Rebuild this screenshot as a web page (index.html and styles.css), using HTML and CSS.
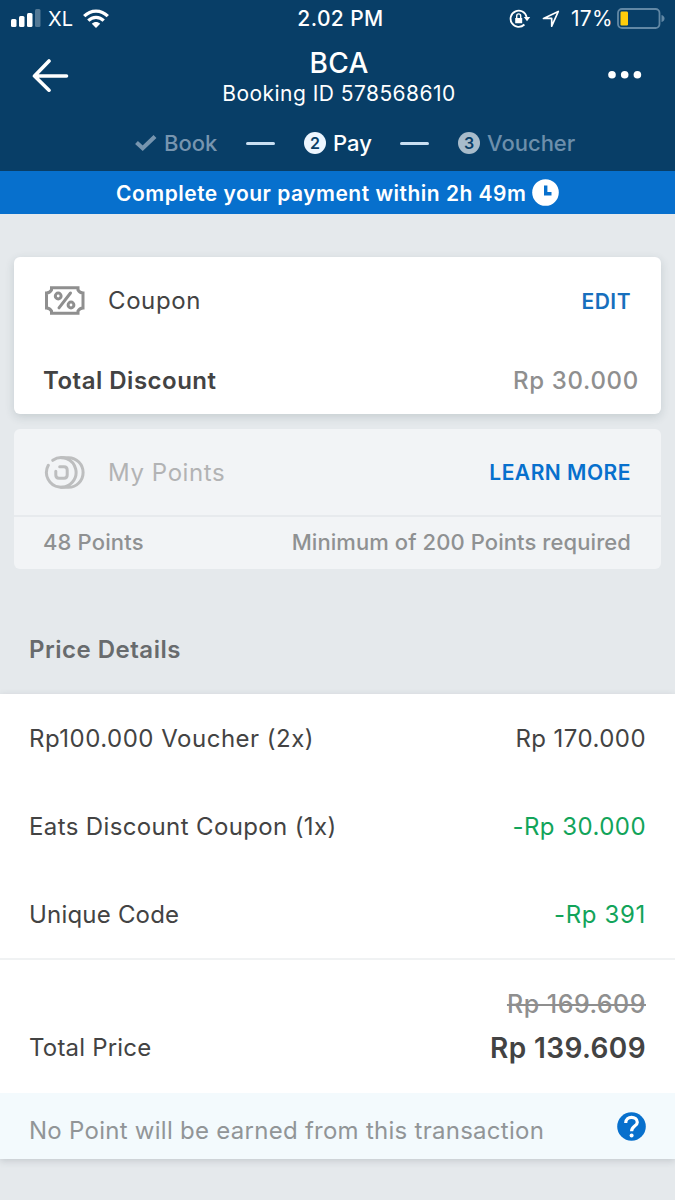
FILE: index.html
```html
<!DOCTYPE html>
<html lang="en">
<head>
<meta charset="utf-8">
<title>BCA Payment</title>
<link rel="stylesheet" href="styles.css">
</head>
<body>
<header class="header">
  <div class="status">
    <div class="status-left">
      <svg width="32" height="20" viewBox="0 0 32 20"><g fill="#fff"><rect x="1" y="10" width="5.5" height="8" rx="1.5"/><rect x="9" y="7" width="5.5" height="11" rx="1.5"/><rect x="17" y="4" width="5.5" height="14" rx="1.5"/><rect x="25" y="0" width="5.5" height="18" rx="1.5" opacity=".3"/></g></svg>
      <span class="carrier">XL</span>
      <svg class="wifi" width="26" height="20" viewBox="0 0 26 20"><g fill="none" stroke="#fff" stroke-width="3.2"><path d="M1.2 7.2C7.8.3 18.2.3 24.8 7.2"/><path d="M5.3 11.6C9.6 7.2 16.4 7.2 20.7 11.6"/></g><path fill="#fff" d="M8.8 14.7C11.2 12.4 14.8 12.4 17.2 14.7L13 19Z"/></svg>
    </div>
    <span class="clock">2.02 PM</span>
    <div class="status-right">
      <svg width="22" height="20" viewBox="0 0 22 20"><path fill="none" stroke="#fff" stroke-width="1.8" d="M17.600 8A8.100 8.100 0 1 0 15.400 15.500"/><path fill="#fff" d="M14.800 8h6.400L18 12.300ZM6.200 8.900h7v5.400h-7z"/><path fill="none" stroke="#fff" stroke-width="1.400" d="M7.700 9V6.900a2 2 0 0 1 4 0V9"/></svg>
      <svg class="locate" width="18" height="18" viewBox="0 0 18 18"><path fill="none" stroke="#fff" stroke-width="1.700" stroke-linejoin="round" d="M1.500 8.400L16.300 1.500 9.700 16.200V8.400Z"/></svg>
      <span class="percent">17%</span>
      <svg class="battery" width="48" height="22" viewBox="0 0 48 22"><rect x="1" y="1" width="41.500" height="19" rx="4" fill="none" stroke="#6288a5" stroke-width="1.800"/><path fill="#6288a5" d="M44.500 7q3 1 3 3.500t-3 3.500z"/><rect x="3.500" y="3.500" width="7.500" height="14" rx="1.200" fill="#ffcc0a"/></svg>
    </div>
  </div>
  <div class="title-bar">
    <svg class="back" width="38" height="34" viewBox="0 0 38 34"><path fill="none" stroke="#fff" stroke-width="3.600" stroke-linecap="round" stroke-linejoin="round" d="M18 3L3.500 18 18 32.200M3.500 18H35.500"/></svg>
    <div class="title"><h1>BCA</h1><p>Booking ID 578568610</p></div>
    <svg class="more" width="34" height="10" viewBox="0 0 34 10"><g fill="#fff"><circle cx="4" cy="4.800" r="3.800"/><circle cx="16.700" cy="4.800" r="3.800"/><circle cx="29.400" cy="4.800" r="3.800"/></g></svg>
  </div>
  <nav class="steps">
    <svg width="24" height="18" viewBox="0 0 24 18"><path fill="none" stroke="#7795af" stroke-width="4.200" d="M2.500 8.500L8.700 14.200 21 2.500"/></svg>
    <span class="book">Book</span>
    <i class="dash"></i>
    <span class="num">2</span><span class="pay">Pay</span>
    <i class="dash"></i>
    <span class="num off">3</span><span class="voucher">Voucher</span>
  </nav>
</header>
<div class="banner"><span>Complete your payment within 2h 49m</span>
  <svg width="27" height="27" viewBox="0 0 27 27"><circle cx="13.500" cy="13.500" r="13.300" fill="#fff"/><path d="M13.700 6.500V14.800H19.500" fill="none" stroke="#0770cd" stroke-width="3.400"/></svg>
</div>
<main class="content">
  <section class="card coupon">
    <div class="row head">
      <svg width="41" height="29" viewBox="0 0 41 29"><g fill="none" stroke="#8f8f8f" stroke-width="3"><path d="M7.500 1.800H34V4Q35.500 6.800 39 7V22Q35.500 22.200 34 25V27.200H7.500V25Q6 22.200 2.500 22V7Q6 6.800 7.500 4Z"/><circle cx="14.200" cy="10" r="2.900"/><circle cx="27" cy="19" r="2.900"/><path stroke-linecap="round" d="M26.500 7L15 21.800"/></g></svg>
      <span class="label">Coupon</span><a class="action edit">EDIT</a>
    </div>
    <div class="row total"><span class="tdisc">Total Discount</span><span class="tamount">Rp 30.000</span></div>
  </section>
  <section class="card points">
    <div class="row phead">
      <svg width="41" height="33" viewBox="0 0 41 33"><g fill="none" stroke="#bdbebf" stroke-width="3" stroke-linecap="round"><path d="M8.800 4.300A14.800 14.800 0 1 1 4.300 9.300" /><path d="M17.500 1.700H24.500A14.600 14.800 0 0 1 24.500 31.300H17.500"/><path d="M15.700 10.800H20Q23.200 10.800 23.200 14V19Q23.200 22.200 20 22.200H15Q11.800 22.200 11.800 19V15.200"/></g></svg>
      <span class="label mypoints">My Points</span><a class="action learn">LEARN MORE</a>
    </div>
    <div class="row pinfo"><span class="balance">48 Points</span><span class="minimum">Minimum of 200 Points required</span></div>
  </section>
  <h2>Price Details</h2>
</main>
<section class="prices">
  <div class="line"><span class="voucher-name">Rp100.000 Voucher (2x)</span><span class="cost">Rp 170.000</span></div>
  <div class="line"><span class="eats">Eats Discount Coupon (1x)</span><span class="cost green">-Rp 30.000</span></div>
  <div class="line"><span class="unique">Unique Code</span><span class="cost green code">-Rp 391</span></div>
  <div class="sum"><s>Rp 169.609</s><div class="sum-row"><span class="tprice">Total Price</span><strong>Rp 139.609</strong></div></div>
  <div class="note"><span>No Point will be earned from this transaction</span>
    <svg width="29" height="29" viewBox="0 0 29 29"><circle cx="14.500" cy="14.500" r="14.300" fill="#0770cd"/><path fill="none" stroke="#fff" stroke-width="3.200" d="M8.700 11C8.700 3.300 20.300 3.800 20.300 10.200C20.300 14.300 14.600 14 14.600 19.200"/><circle cx="14.600" cy="23.600" r="2" fill="#fff"/></svg>
  </div>
</section>
</body>
</html>
```
FILE: styles.css
```css
* { box-sizing: border-box; }
body { margin: 0; width: 675px; height: 1200px; overflow: hidden; background: #e5e9ec; color: #434343; font-family: Inter, "Liberation Sans", sans-serif; font-size: 24px; white-space: nowrap; }
svg { display: block; flex: none; }
h1, h2, p { margin: 0; }
.header { height: 171px; background: #083e67; color: #fff; }
.status { height: 37px; display: grid; grid-template-columns: 240px 1fr 240px; align-items: center; font-size: 20px; }
.status-left { display: flex; align-items: center; padding-left: 10px; }
.carrier { margin-left: 6px; }
.wifi { margin-left: 10px; }
.clock { font-size: 21px; font-weight: 500; letter-spacing: .4px; justify-self: center; padding-left: 6px; }
.status-right { display: flex; align-items: center; justify-content: flex-end; padding-right: 10px; }
.locate { margin-left: 11px; }
.percent { margin-left: 11px; width: 43px; font-size: 21px; letter-spacing: .3px; }
.battery { margin-left: 3px; }
.title-bar { height: 76px; display: grid; grid-template-columns: 120px 1fr 120px; align-items: center; }
.back { margin-left: 31px; }
.title { text-align: center; padding: 3px 0 0 3px; }
.title h1 { font-size: 28px; font-weight: 500; line-height: 34px; letter-spacing: .3px; }
.title p { font-size: 21px; line-height: 27px; letter-spacing: .45px; }
.more { justify-self: end; margin-right: 33px; }
.steps { display: flex; align-items: center; height: 60px; padding-left: 134px; font-size: 22px; font-weight: 500; }
.book { color: #7795af; margin-left: 6px; width: 53px; }
.dash { width: 29px; height: 3px; border-radius: 2px; background: #c9dff2; margin: 0 29px; }
.num { width: 22px; height: 22px; border-radius: 50%; background: #edf6ff; color: #083e67; font-size: 16px; font-weight: 600; line-height: 22px; text-align: center; }
.num.off { background: #a8bccb; }
.pay { margin-left: 7px; width: 38px; }
.voucher { margin-left: 7px; color: #6d8fab; }
.banner { height: 43px; background: #0770cd; color: #fff; display: flex; align-items: center; gap: 6px; padding: 0 0 0 116px; font-size: 21px; font-weight: 600; letter-spacing: .49px; }
.banner span { padding-top: 1px; }
.content { padding: 43px 14px 0; height: 480px; }
.card { border-radius: 6px; }
.row { display: flex; align-items: center; justify-content: space-between; padding: 0 30px; }
.coupon { height: 157px; background: #fff; box-shadow: 0 3px 10px rgba(40, 60, 70, .16); }
.head { height: 87px; }
.label { flex: 1; margin-left: 23px; letter-spacing: .6px; }
.action { color: #176fbd; font-weight: 600; font-size: 21px; letter-spacing: .5px; padding-top: 1px; }
.total { height: 73px; padding: 0 22px 0 29px; font-weight: 600; }
.tdisc { letter-spacing: .5px; }
.tamount { color: #8f8f8f; font-weight: 500; letter-spacing: .7px; }
.points { margin-top: 15px; height: 140px; background: #f2f4f6; }
.phead { height: 88px; border-bottom: 2px solid #e7eaed; }
.mypoints { color: #b2b3b4; }
.learn { color: #0770cd; }
.pinfo { height: 50px; padding-left: 29px; font-size: 22px; font-weight: 500; color: #8f9192; letter-spacing: .08px; }
.balance { letter-spacing: .15px; }
h2 { margin-top: 65px; padding-left: 15px; font-size: 24px; font-weight: 600; line-height: 32px; letter-spacing: .5px; color: #686b6d; }
.prices { height: 465px; background: #fff; box-shadow: 0 2px 7px rgba(50, 60, 70, .18); }
.line { height: 88px; display: flex; align-items: center; justify-content: space-between; padding: 0 29px; }
.voucher-name { letter-spacing: .5px; }
.eats { letter-spacing: .37px; }
.unique, .tprice { letter-spacing: .2px; }
.cost { letter-spacing: .45px; }
.code { letter-spacing: .65px; }
.green { color: #12a45a; }
.sum { margin-top: 0; height: 135px; border-top: 2px solid #f0f2f3; padding: 27px 29px 0; text-align: right; }
.sum s { display: block; color: #8f8f8f; font-size: 25px; font-weight: 500; line-height: 34px; letter-spacing: .5px; text-decoration-thickness: 2px; }
.sum-row { display: flex; justify-content: space-between; align-items: center; height: 53px; }
.sum strong { font-size: 28px; font-weight: 600; letter-spacing: .4px; }
.note { height: 66px; display: flex; align-items: center; justify-content: space-between; padding: 0 29px; background: #f3fafd; color: #919597; letter-spacing: .27px; }
.note span { padding-top: 8px; }
```
